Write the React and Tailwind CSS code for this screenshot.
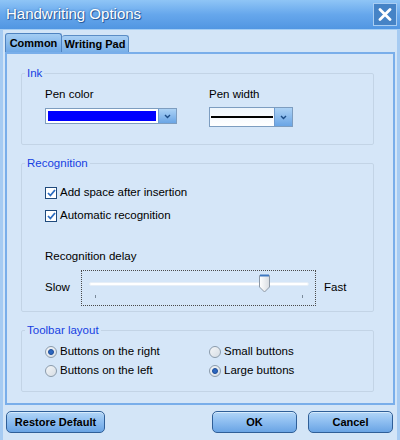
import React from "react";

const Chevron = () => (
  <svg width="7" height="5" viewBox="0 0 7 5" className="block">
    <path d="M1 1 L3.5 3.5 L6 1" fill="none" stroke="#1d4c86" strokeWidth="1.4" />
  </svg>
);

const DropButton = ({ className = "" }) => (
  <div
    className={`w-[18px] self-stretch flex items-center justify-center bg-gradient-to-b from-[#acd2f5] to-[#6aa5e5] border-l border-[#6f9bd0] ${className}`}
  >
    <Chevron />
  </div>
);

const Check = ({ label }) => (
  <div className="flex items-center h-[14px]">
    <div className="w-[12px] h-[12px] shrink-0 bg-white border border-[#1f4a7c] flex items-center justify-center">
      <svg width="9" height="8" viewBox="0 0 9 8">
        <path d="M1 4 L3.4 6.5 L8 1" fill="none" stroke="#2b6cc0" strokeWidth="1.8" />
      </svg>
    </div>
    <span className="ml-[3px]">{label}</span>
  </div>
);

const Radio = ({ label, checked }) => (
  <div className="flex items-center h-[14px]">
    <div className="w-[12px] h-[12px] shrink-0 rounded-full border border-[#8b9bab] bg-gradient-to-br from-[#f4f6f8] to-[#d6dde4] flex items-center justify-center">
      {checked && <div className="w-[6px] h-[6px] rounded-full bg-[#2d67bf] border border-[#1c4d99]" />}
    </div>
    <span className="ml-[3px]">{label}</span>
  </div>
);

const Group = ({ title, className = "", children }) => (
  <fieldset className={`ml-[14px] w-[353px] border border-[#c3d4e6] rounded-[2px] ${className}`}>
    <legend className="ml-[3px] px-[2px] leading-[14px] text-[#1640e2]">{title}</legend>
    {children}
  </fieldset>
);

const Button = ({ children, className = "" }) => (
  <button
    className={`h-[22px] rounded-[5px] border border-[#2f5f98] bg-gradient-to-b from-[#b2d6f7] via-[#8cbdf0] to-[#69a4e4] font-bold text-[11px] text-black shadow-[inset_0_1px_0_#d6ebfc] ${className}`}
  >
    {children}
  </button>
);

export default function App() {
  return (
    <div className="w-[400px] h-[440px] flex flex-col bg-[#d3e5f7] font-['Liberation_Sans',Arial,sans-serif] text-[11.5px] text-black overflow-hidden">
      <div className="h-[30px] shrink-0 flex items-center justify-between pl-[6px] pr-[3px] bg-gradient-to-b from-[#8fc5f6] via-[#66a7ec] to-[#5196e2] border-b border-[#a3cdf4]">
        <span className="text-[15px] text-white [text-shadow:1px_1px_0_#2b5d9c,0_0_2px_#2b5d9c]">
          Handwriting Options
        </span>
        <div className="w-[24px] h-[23px] border border-[#a8cdf2] bg-[#4583c6] flex items-center justify-center">
          <svg width="14" height="13" viewBox="0 0 14 13">
            <path d="M2 1.5 L12 11.5 M12 1.5 L2 11.5" stroke="white" strokeWidth="2.8" strokeLinecap="round" />
          </svg>
        </div>
      </div>

      <div className="flex-1 flex flex-col border-x-[3px] border-[#a6cbf2]">
        <div className="flex items-end h-[22px] pl-[2px] pt-[3px]">
          <div className="h-[19px] w-[57px] flex items-center justify-center rounded-t-[3px] border border-b-0 border-[#4f83c0] bg-gradient-to-b from-[#a4cdf3] to-[#6ea8e6] font-bold text-[11px]">
            Common
          </div>
          <div className="h-[17px] w-[67px] flex items-center justify-center rounded-t-[3px] border border-b-0 border-l-0 border-[#5b8dc6] bg-gradient-to-b from-[#a8cff4] to-[#78afe8] font-bold text-[11px]">
            Writing Pad
          </div>
        </div>

        <div className="mx-[2px] h-[353px] border-2 border-[#79aeea] bg-[#d5e6f8] pt-[12px]">
          <Group title="Ink" className="h-[79px]">
            <div className="grid grid-cols-[164px_1fr] pl-[23px] pt-[7px]">
              <div className="flex flex-col">
                <span className="leading-[14px]">Pen color</span>
                <div className="mt-[7px] w-[132px] h-[16px] flex border border-[#7d9dc0] bg-white">
                  <div className="flex-1 m-[2px] bg-[#0000ff]" />
                  <DropButton />
                </div>
              </div>
              <div className="flex flex-col">
                <span className="leading-[14px]">Pen width</span>
                <div className="mt-[6px] w-[84px] h-[20px] flex border border-[#7d9dc0] bg-gradient-to-b from-[#eef5fc] to-white">
                  <div className="flex-1 flex items-center px-[1px]">
                    <div className="w-full h-[2px] bg-black" />
                  </div>
                  <DropButton />
                </div>
              </div>
            </div>
          </Group>

          <Group title="Recognition" className="h-[156px] mt-[11px]">
            <div className="pl-[23px] pt-[16px] flex flex-col">
              <Check label="Add space after insertion" />
              <div className="mt-[9px]">
                <Check label="Automatic recognition" />
              </div>
              <span className="mt-[26px] leading-[14px]">Recognition delay</span>
              <div className="mt-[7px] flex items-center">
                <span className="w-[36px]">Slow</span>
                <div className="relative w-[235px] h-[36px] border border-dotted border-[#4a4a4a] pl-[7px] pr-[6px] pt-[11px]">
                  <div className="h-[4px] rounded-full bg-white border border-[#e6eef7]" />
                  <div className="flex justify-between px-[6px] pt-[9px]">
                    <div className="w-px h-[3px] bg-[#7a8a9a]" />
                    <div className="w-px h-[3px] bg-[#7a8a9a]" />
                  </div>
                  <svg className="absolute left-[177px] top-[3px]" width="11" height="19" viewBox="0 0 11 19">
                    <defs>
                      <linearGradient id="th" x1="0" y1="0" x2="1" y2="0">
                        <stop offset="0" stopColor="#ffffff" />
                        <stop offset="1" stopColor="#d9dde2" />
                      </linearGradient>
                    </defs>
                    <path d="M0.5 1.5 H10.5 V13 L5.5 18 L0.5 13 Z" fill="url(#th)" stroke="#8c98a6" />
                    <path d="M1 1.5 H10" stroke="#3f78c0" strokeWidth="2" />
                  </svg>
                </div>
                <span className="ml-[8px]">Fast</span>
              </div>
            </div>
          </Group>

          <Group title="Toolbar layout" className="h-[69px] mt-[11px]">
            <div className="grid grid-cols-[164px_1fr] gap-y-[5px] pl-[23px] pt-[8px]">
              <Radio label="Buttons on the right" checked />
              <Radio label="Small buttons" />
              <Radio label="Buttons on the left" />
              <Radio label="Large buttons" checked />
            </div>
          </Group>
        </div>

        <div className="flex items-start pt-[6px] pl-[3px] pr-[4px]">
          <Button className="w-[99px]">Restore Default</Button>
          <Button className="w-[85px] ml-auto">OK</Button>
          <Button className="w-[85px] ml-[11px]">Cancel</Button>
        </div>
      </div>
    </div>
  );
}
